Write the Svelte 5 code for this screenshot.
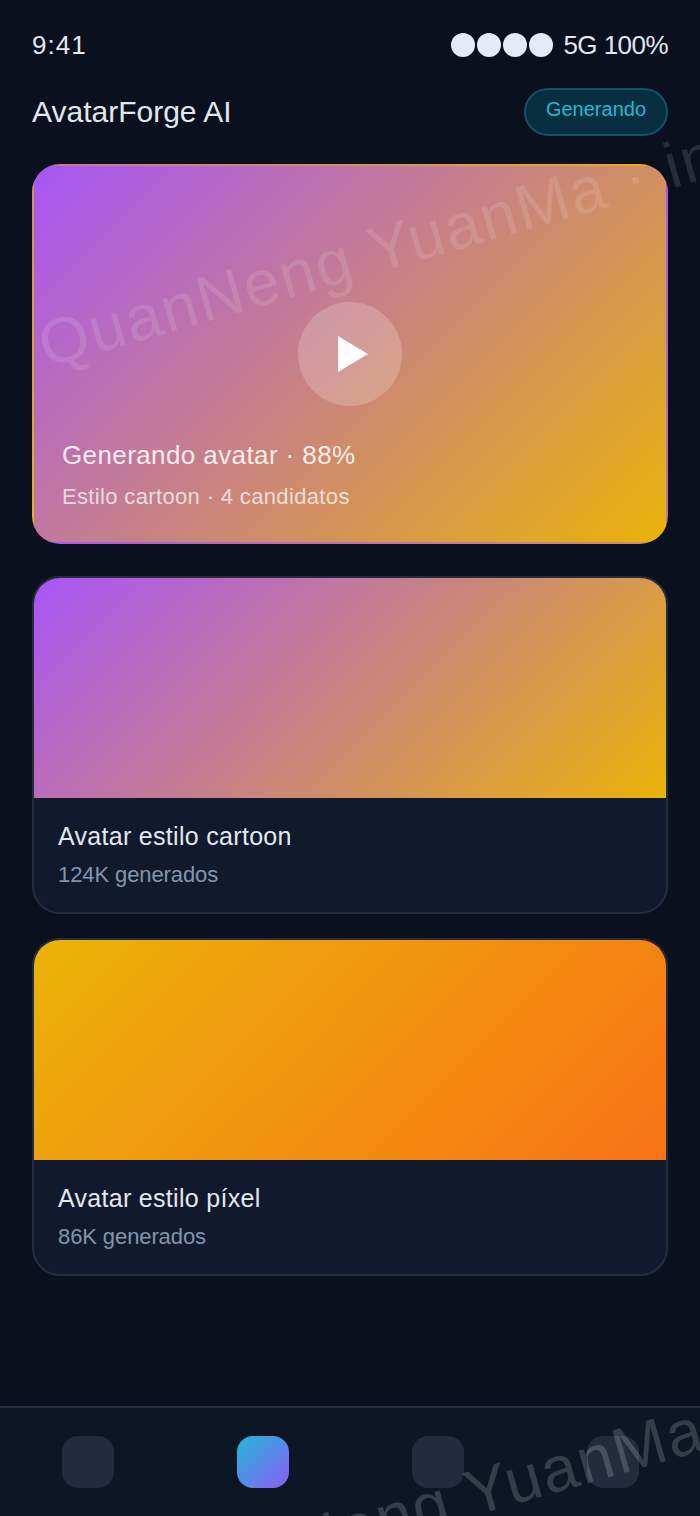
<script>
  const cards = [
    { title: 'Avatar estilo cartoon', sub: '124K generados', thumb: 'purple' },
    { title: 'Avatar estilo píxel', sub: '86K generados', thumb: 'amber' }
  ]
  const tabs = [false, true, false, false]
</script>

<div class="screen">
  <div class="status">
    <span class="time">9:41</span>
    <div class="status_right">
      <div class="dots">
        {#each Array(4) as _}
          <i></i>
        {/each}
      </div>
      <span class="signal">5G 100%</span>
    </div>
  </div>

  <header>
    <h1>AvatarForge AI</h1>
    <span class="badge">Generando</span>
  </header>

  <section class="hero">
    <div class="play">
      <svg width="30" height="36" viewBox="0 0 30 36"><path d="M0 0 L30 18 L0 36 Z" fill="#fff" /></svg>
    </div>
    <div class="hero_text">
      <div class="hero_title">Generando avatar · 88%</div>
      <div class="hero_sub">Estilo cartoon · 4 candidatos</div>
    </div>
  </section>

  {#each cards as card}
    <article class="card">
      <div class="thumb {card.thumb}"></div>
      <div class="info">
        <div class="card_title">{card.title}</div>
        <div class="card_sub">{card.sub}</div>
      </div>
    </article>
  {/each}

  <nav>
    {#each tabs as active}
      <div class="tab" class:active></div>
    {/each}
  </nav>

  <div class="mark mark_top">QuanNeng YuanMa · internal</div>
  <div class="mark mark_bottom">QuanNeng YuanMa</div>
</div>

<style>
  :global(body) {
    background: #0a101d;
  }

  .screen {
    position: relative;
    width: 700px;
    height: 1516px;
    padding-top: 24px;
    box-sizing: border-box;
    overflow: hidden;
    background: #0a101d;
    color: #e2e8f0;
    font-family: "Liberation Sans", Arial, sans-serif;
  }

  .status {
    display: flex;
    justify-content: space-between;
    align-items: center;
    height: 42px;
    padding: 0 32px;
    font-size: 26px;
  }

  .time {
    letter-spacing: 1px;
  }

  .signal {
    letter-spacing: -0.55px;
  }

  .status_right {
    display: flex;
    align-items: center;
    gap: 10px;
  }

  .dots {
    display: flex;
    gap: 2px;
  }

  .dots i {
    width: 24px;
    height: 24px;
    border-radius: 50%;
    background: #e6eaf6;
  }

  header {
    display: flex;
    justify-content: space-between;
    align-items: center;
    height: 48px;
    margin: 22px 32px 28px;
  }

  h1 {
    margin: 0;
    font-size: 30px;
    font-weight: 400;
    color: #e2e8f0;
  }

  .badge {
    padding: 0 20px 6px;
    height: 38px;
    display: flex;
    align-items: center;
    border: 2px solid #164e63;
    border-radius: 24px;
    background: #082f3f;
    color: #22b8d8;
    font-size: 20px;
  }

  .hero {
    position: relative;
    height: 380px;
    margin: 0 32px 32px;
    box-sizing: border-box;
    border: 2px solid transparent;
    border-radius: 28px;
    background: linear-gradient(135deg, #a855f7, #eab308);
    display: flex;
    align-items: center;
    justify-content: center;
  }

  .play {
    width: 104px;
    height: 104px;
    border-radius: 50%;
    background: rgba(255, 255, 255, 0.2);
    display: flex;
    align-items: center;
    justify-content: center;
    padding-left: 6px;
    box-sizing: border-box;
  }

  .hero_text {
    position: absolute;
    left: 28px;
    bottom: 32px;
  }

  .hero_title {
    font-size: 26px;
    letter-spacing: 0.4px;
    color: #fff;
    opacity: 0.85;
    margin-bottom: 13px;
    margin-top: -1px;
  }

  .hero_sub {
    font-size: 22px;
    letter-spacing: 0.35px;
    color: #fff;
    opacity: 0.7;
  }

  .card {
    margin: 0 32px 24px;
    border: 2px solid #232d42;
    border-radius: 28px;
    background: #111a2c;
    overflow: hidden;
  }

  .thumb {
    height: 220px;
  }

  .purple {
    background: linear-gradient(135deg, #a855f7, #eab308);
  }

  .amber {
    background: linear-gradient(135deg, #eab308, #f97316);
  }

  .info {
    padding: 24px 24px 0;
    height: 114px;
    box-sizing: border-box;
  }

  .card_title {
    font-size: 25px;
    letter-spacing: 0.3px;
    color: #e2e8f0;
    margin-bottom: 11px;
  }

  .card_sub {
    font-size: 22px;
    letter-spacing: -0.1px;
    color: #8195ae;
  }

  nav {
    position: absolute;
    left: 0;
    right: 0;
    bottom: 0;
    height: 110px;
    box-sizing: border-box;
    border-top: 2px solid #232c3d;
    background: #0d1625;
    display: flex;
    justify-content: space-around;
    padding-top: 28px;
  }

  .tab {
    width: 52px;
    height: 52px;
    border-radius: 16px;
    background: #232c3d;
  }

  .tab.active {
    background: linear-gradient(135deg, #22b8d8, #8b5cf6);
  }

  .mark {
    position: absolute;
    font-size: 64px;
    letter-spacing: 1.8px;
    white-space: nowrap;
    color: rgba(255, 255, 255, 0.12);
    transform: rotate(-16deg);
    transform-origin: left top;
    pointer-events: none;
  }

  .mark_top {
    left: 30px;
    top: 311px;
  }

  .mark_bottom {
    left: 127px;
    top: 1554px;
    color: rgba(255, 255, 255, 0.17);
  }
</style>
